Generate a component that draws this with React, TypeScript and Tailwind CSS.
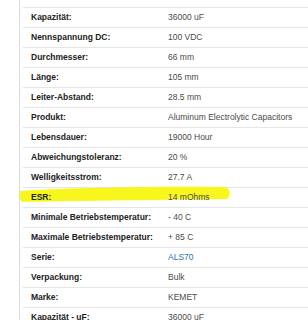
import React from 'react';

interface SpecRow {
  label: string;
  value: string;
  link?: boolean;
  marked?: boolean;
}

const specs: SpecRow[] = [
  { label: 'Kapazität:', value: '36000 uF' },
  { label: 'Nennspannung DC:', value: '100 VDC' },
  { label: 'Durchmesser:', value: '66 mm' },
  { label: 'Länge:', value: '105 mm' },
  { label: 'Leiter-Abstand:', value: '28.5 mm' },
  { label: 'Produkt:', value: 'Aluminum Electrolytic Capacitors' },
  { label: 'Lebensdauer:', value: '19000 Hour' },
  { label: 'Abweichungstoleranz:', value: '20 %' },
  { label: 'Welligkeitsstrom:', value: '27.7 A' },
  { label: 'ESR:', value: '14 mOhms', marked: true },
  { label: 'Minimale Betriebstemperatur:', value: '- 40 C' },
  { label: 'Maximale Betriebstemperatur:', value: '+ 85 C' },
  { label: 'Serie:', value: 'ALS70', link: true },
  { label: 'Verpackung:', value: 'Bulk' },
  { label: 'Marke:', value: 'KEMET' },
  { label: 'Kapazität - uF:', value: '36000 uF' },
];

// 형광펜 자국 (ESR 행 위에 겹쳐 그림)
const Highlighter: React.FC = () => (
  <svg className="pointer-events-none absolute left-0 top-0 h-px w-px overflow-visible">
    <path
      d="M-3,3 C37,0 127,-2 203,-1 Q210,4 204,11 C127,12 37,13 -1,14 Q-5,9 -3,3 Z"
      fill="#f7f71e"
    />
  </svg>
);

export default function App() {
  return (
    <div
      className="h-[320px] w-[308px] overflow-hidden bg-white pl-[19px]"
      style={{ fontFamily: '"Liberation Sans", Arial, sans-serif' }}
    >
      <div className="h-full border-l border-[#dcdcdc] pl-[3px]">
        {/* 위쪽으로 잘린 행 */}
        <div className="h-[8px] border-b border-[#e5e5e5]" />
        {specs.map((row) => (
          <div
            key={row.label}
            className="relative flex h-[20px] items-center border-b border-[#e5e5e5] text-[8.5px]"
          >
            {row.marked && <Highlighter />}
            <div className="relative w-[145px] shrink-0 pl-[8px] font-bold text-[#222]">
              {row.label}
            </div>
            <div className={`relative ${row.link ? 'text-[#2a72b5]' : 'text-[#4a4a4a]'}`}>
              {row.value}
            </div>
          </div>
        ))}
      </div>
    </div>
  );
}
